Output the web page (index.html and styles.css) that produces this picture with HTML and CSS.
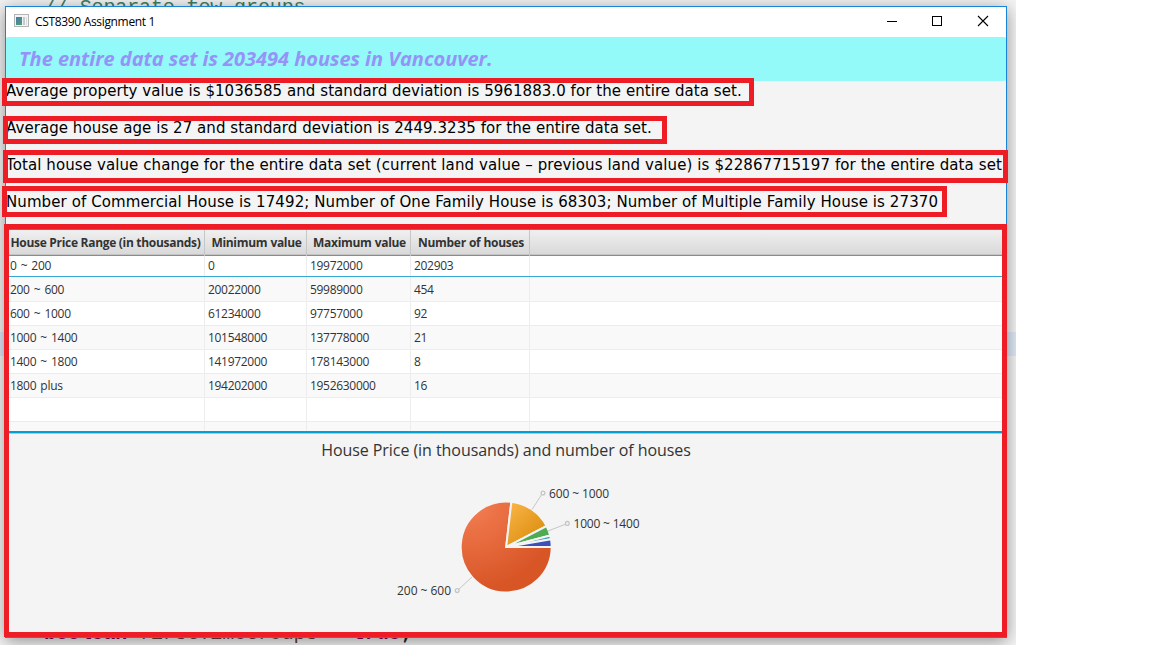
FILE: index.html
```html
<!DOCTYPE html>
<html lang="en">
<head>
<meta charset="utf-8">
<title>CST8390 Assignment 1</title>
<link rel="stylesheet" href="styles.css">
</head>
<body>
<div class="editor">
  <div class="code code-top">// Separate few groups</div>
  <div class="current-line"></div>
  <div class="code code-bottom"><b>boolean</b> <i>firstTimeGroups</i> = <b>true</b><strong>;</strong></div>

  <main class="window">
    <header class="titlebar">
      <svg class="app-icon" width="15" height="13" viewBox="0 0 15 13">
        <defs><linearGradient id="ic" x1="0" y1="0" x2="0.6" y2="1"><stop offset="0" stop-color="#4a78b0"/><stop offset="1" stop-color="#4f9a78"/></linearGradient></defs>
        <rect x="0.5" y="0.5" width="14" height="12" fill="#f4f4f4" stroke="#b4b4b4"/>
        <rect x="2" y="3" width="6" height="8" fill="url(#ic)"/>
        <rect x="9" y="3" width="2" height="8" fill="#c3cccb"/>
        <rect x="12" y="3" width="1" height="8" fill="#d8dcdc"/>
      </svg>
      <span class="title">CST8390 Assignment 1</span>
      <svg class="controls" width="102" height="12" viewBox="0 0 102 12" fill="none" stroke="#000">
        <path d="M0 6.5H10"/>
        <rect x="45.5" y="1.5" width="9" height="9"/>
        <path d="M91 1L101 11M101 1L91 11" stroke-width="1.1"/>
      </svg>
    </header>
    <h1 class="banner"><span>The entire data set is 203494 houses in Vancouver.</span></h1>
    <section class="stats">
      <p class="s1">Average property value is $1036585 and standard deviation is 5961883.0 for the entire data set.</p>
      <p class="s2">Average house age is 27 and standard deviation is 2449.3235 for the entire data set.</p>
      <p class="s3">Total house value change for the entire data set (current land value – previous land value) is $22867715197 for the entire data set.</p>
      <p class="s4">Number of Commercial House is 17492; Number of One Family House is 68303; Number of Multiple Family House is 27370</p>
    </section>
    <section class="table">
      <div class="row head"><span>House Price Range (in thousands)</span><span>Minimum value</span><span>Maximum value</span><span>Number of houses</span></div>
      <div class="row focused"><span>0 ~ 200</span><span>0</span><span>19972000</span><span>202903</span></div>
      <div class="row odd after-focus"><span>200 ~ 600</span><span>20022000</span><span>59989000</span><span>454</span></div>
      <div class="row"><span>600 ~ 1000</span><span>61234000</span><span>97757000</span><span>92</span></div>
      <div class="row odd"><span>1000 ~ 1400</span><span>101548000</span><span>137778000</span><span>21</span></div>
      <div class="row"><span>1400 ~ 1800</span><span>141972000</span><span>178143000</span><span>8</span></div>
      <div class="row odd"><span>1800 plus</span><span>194202000</span><span>1952630000</span><span>16</span></div>
      <div class="row"><span></span><span></span><span></span><span></span></div>
      <div class="row odd last"><span></span><span></span><span></span><span></span></div>
    </section>
    <section class="chart">
      <h2>House Price (in thousands) and number of houses</h2>
      <svg class="pie" width="300" height="140" viewBox="380 470 300 140">
        <defs>
          <radialGradient id="g1" gradientUnits="userSpaceOnUse" cx="470" cy="500" r="90"><stop offset="0" stop-color="#f58055"/><stop offset="1" stop-color="#d85526"/></radialGradient>
          <linearGradient id="g2" gradientUnits="userSpaceOnUse" x1="510" y1="505" x2="538" y2="535"><stop offset="0" stop-color="#f9b344"/><stop offset="1" stop-color="#de9114"/></linearGradient>
        </defs>
        <g stroke="#f4f4f4" stroke-width="2" stroke-linejoin="miter" stroke-miterlimit="2">
          <path fill="url(#g1)" d="M506.2 547L551.7 547A45.5 45.5 0 1 1 511.35 501.79Z"/>
          <path fill="url(#g2)" d="M506.2 547L511.35 501.79A45.5 45.5 0 0 1 546.56 525.99Z"/>
          <path fill="#50aa52" d="M506.2 547L546.56 525.99A45.5 45.5 0 0 1 550.21 535.45Z"/>
          <path fill="#3f9fbd" d="M506.2 547L550.21 535.45A45.5 45.5 0 0 1 551.04 539.26Z"/>
          <path fill="#3d4fb8" d="M506.2 547L551.04 539.26A45.5 45.5 0 0 1 551.7 547Z"/>
        </g>
        <g fill="none" stroke="#c6c6c6">
          <path d="M532 509.5L542 494M548 531L566 524M472 577L458 590"/>
          <g stroke-width="1.3"><circle cx="543" cy="493" r="1.9"/><circle cx="567.3" cy="523.4" r="1.9"/><circle cx="457.2" cy="590.6" r="1.9"/></g>
        </g>
        <g class="labels"><text x="549" y="498" textLength="60">600 ~ 1000</text><text x="573.5" y="528" textLength="66">1000 ~ 1400</text><text x="397" y="595" textLength="54">200 ~ 600</text></g>
      </svg>
    </section>
  </main>
  <div class="mark m1"></div><div class="mark m2"></div><div class="mark m3"></div><div class="mark m4"></div><div class="mark m5"></div>
</div>
</body>
</html>
```
FILE: styles.css
```css
* { box-sizing: border-box; }
body { margin: 0; background: #fff; font-family: "Open Sans", "Noto Sans", sans-serif; }
.editor { position: relative; width: 1016px; height: 645px; padding: 6px 0 0 5px; overflow: hidden; background: #f4f4f4; }
.code { position: absolute; left: 44px; font: 20px/24px "Liberation Mono", monospace; letter-spacing: -0.12px; white-space: pre; }
.code-top { top: -4px; color: #3f7f5f; }
.code-bottom { top: 622px; color: #222; }
.code b { color: #7f0055; }
.code i { color: #6a3e3e; font-style: normal; }
.current-line { position: absolute; left: 0; top: 332px; width: 1016px; height: 24px; background: #dfe9f8; }
.window { position: relative; display: flex; flex-direction: column; width: 1002px; height: 632px; border: 1px solid #1883d7; background: #f4f4f4; box-shadow: 0 3px 16px rgba(0,0,0,.42); }
.titlebar { display: flex; align-items: center; height: 30px; padding: 0 17px 0 8px; background: #fff; }
.app-icon { margin-bottom: 3px; }
.title { margin-left: 6px; font-size: 12px; line-height: 16px; letter-spacing: -0.33px; color: #000; white-space: nowrap; }
.controls { margin-left: auto; margin-bottom: 3px; }
.banner { margin: 0; height: 44px; padding-left: 13px; border-radius: 2px; background: #94faf9; color: #9693f8; font-size: 20px; letter-spacing: -0.03px; font-style: italic; font-weight: 700; line-height: 43px; white-space: nowrap; }
.stats { height: 148px; color: #000; font-family: "DejaVu Sans", sans-serif; font-size: 15px; }
.stats p { margin: 0; height: 37px; line-height: 20px; white-space: nowrap; }
.s1, .s2 { letter-spacing: 0.06px; }
.s3, .s4 { letter-spacing: 0.094px; }
.table { height: 205px; border-top: 1px solid #039ed3; border-bottom: 1px solid #8fd3ea; box-shadow: inset 0 -1px #039ed3; background: #fff; overflow: hidden; color: #333; font-size: 12px; }
.row { display: grid; grid-template-columns: 199px 102px 104px 119px 1fr; height: 24px; border-bottom: 1px solid #ededed; line-height: 24px; background: #fff; }
.row span { padding-left: 3px; border-right: 1px solid #ededed; letter-spacing: -0.3px; word-spacing: 0.3px; white-space: nowrap; }
.row span:first-child { padding-left: 4px; word-spacing: 1.3px; }
.odd { background: #f9f9f9; }
.after-focus { height: 25px; line-height: 26px; }
.last { height: 10px; border-bottom: 1px solid #039ed3; }
.head { height: 25px; line-height: 26px; background: linear-gradient(#f0f0f0, #d9d9d9); border-bottom-color: #c4c4c4; font-weight: 700; }
.head span { padding: 0 0 0 2px; border-color: #c6c6c6; text-align: center; }
.row.head span:first-child { padding-left: 1px; word-spacing: 0; }
.focused { height: 22px; line-height: 20px; border-top: 1px solid #35a8d6; border-bottom-color: #35a8d6; }
.chart { display: flex; flex-direction: column; align-items: flex-start; color: #333; }
.chart h2 { align-self: center; margin: 4px 0 0; font-size: 16px; font-weight: 400; line-height: 24px; letter-spacing: -0.06px; white-space: nowrap; }
.pie { margin: 8px 0 0 374px; }
.labels { fill: #333; font-size: 12px; }
.mark { position: absolute; border: 5px solid #ee1c24; }
.m1 { left: 2px; top: 78px; width: 752px; height: 28px; }
.m2 { left: 3px; top: 116px; width: 664px; height: 28px; }
.m3 { left: 3px; top: 150px; width: 1005px; height: 33px; }
.m4 { left: 2px; top: 186px; width: 945px; height: 31px; }
.m5 { left: 4px; top: 224px; width: 1003px; height: 413px; }
```
